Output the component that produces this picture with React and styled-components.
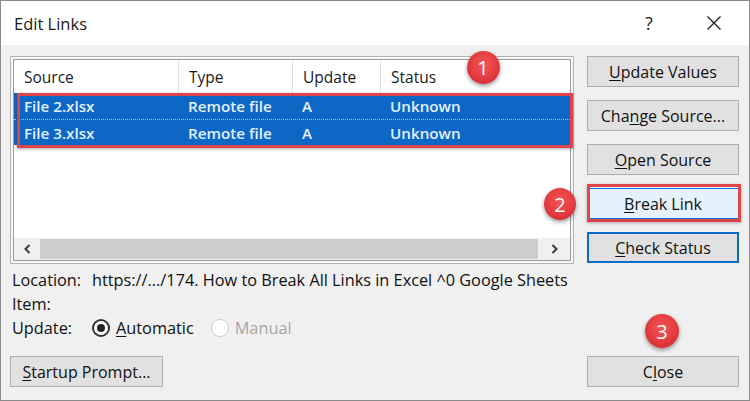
import React from "react";
import styled, { createGlobalStyle } from "styled-components";

const Global = createGlobalStyle`
  html, body { margin: 0; padding: 0; background: #fff; }
  * { box-sizing: border-box; }
  body { font-family: "Open Sans", "Noto Sans", sans-serif; }
`;

const Window = styled.div`
  position: relative;
  width: 750px;
  height: 401px;
  border: 1px solid #8a8a8a;
  display: flex;
  flex-direction: column;
  background: #f0f0f0;
  overflow: hidden;
`;

const TitleBar = styled.div`
  height: 44px;
  background: #fff;
  display: flex;
  align-items: center;
  padding-left: 13px;
  padding-right: 25px;
  flex-shrink: 0;
`;

const Title = styled.div`
  font-size: 16.5px;
  color: #1a1a1a;
  flex: 1;
`;

const TitleIcon = styled.div`
  width: 20px;
  display: flex;
  justify-content: center;
  align-items: center;
  font-size: 18px;
  color: #222;
  margin-left: ${(p) => p.$gap || 0}px;
`;

const Body = styled.div`
  flex: 1;
  display: flex;
  padding: 11px 10px 13px 9px;
`;

const LeftCol = styled.div`
  width: 564px;
  display: flex;
  flex-direction: column;
`;

const RightCol = styled.div`
  width: 152px;
  margin-left: 13px;
  display: flex;
  flex-direction: column;
  gap: 13px;
`;

const Frame = styled.div`
  height: 208px;
  border: 1px solid #b4b4b4;
  padding: 2px;
  background: #f8f8f8;
  display: flex;
`;

const ListInner = styled.div`
  flex: 1;
  border: 1px solid #9a9a9a;
  background: #fff;
  display: flex;
  flex-direction: column;
`;

const cols = "164px 114px 88px 1fr";

const HeaderRow = styled.div`
  height: 33px;
  display: grid;
  grid-template-columns: ${cols};
  font-size: 15.5px;
  color: #1a1a1a;
`;

const HeaderCell = styled.div`
  display: flex;
  align-items: center;
  padding-left: 10px;
  border-left: ${(p) => (p.$first ? "none" : "1px solid #e3e3e3")};
`;

const RowsGroup = styled.div`
  position: relative;
  &::after {
    content: "";
    position: absolute;
    top: 0;
    left: 3px;
    right: -3px;
    bottom: -3px;
    border: 3px solid #e0444b;
    box-shadow: 0 1px 3px rgba(0, 0, 0, 0.35);
    pointer-events: none;
  }
`;

const DataRow = styled.div`
  height: 26px;
  display: grid;
  grid-template-columns: ${cols};
  background: #0c67c5;
  color: #e4f1ff;
  font-size: 15.2px;
  font-weight: 600;
  border-top: ${(p) => (p.$dotted ? "1px dotted #9cc3ea" : "none")};
`;

const DataCell = styled.div`
  display: flex;
  align-items: center;
  padding-left: 10px;
`;

const Spacer = styled.div`
  flex: 1;
`;

const HScroll = styled.div`
  height: 22px;
  display: flex;
  align-items: stretch;
  background: #f0f0f0;
`;

const ScrollBtn = styled.div`
  width: ${(p) => p.$w}px;
  display: flex;
  align-items: center;
  justify-content: center;
`;

const Thumb = styled.div`
  flex: 1;
  background: #cdcdcd;
  margin: 1px 0;
`;

const InfoRows = styled.div`
  display: flex;
  flex-direction: column;
  margin-top: 4px;
  font-size: 16.3px;
  color: #111;
`;

const InfoRow = styled.div`
  height: 24px;
  display: flex;
  align-items: center;
`;

const Label = styled.div`
  width: 82px;
  padding-left: 2px;
`;

const RadioItem = styled.label`
  display: flex;
  align-items: center;
  gap: 6px;
  margin-right: 17px;
  color: ${(p) => (p.$disabled ? "#a6a6a6" : "#111")};
`;

const RadioCircle = styled.span`
  width: 18px;
  height: 18px;
  border-radius: 50%;
  border: ${(p) => (p.$disabled ? "1.5px solid #cccccc" : "2px solid #333")};
  background: #fff;
  display: flex;
  align-items: center;
  justify-content: center;
  &::after {
    content: "";
    width: 8px;
    height: 8px;
    border-radius: 50%;
    background: #222;
    display: ${(p) => (p.$checked ? "block" : "none")};
  }
`;

const Button = styled.button`
  position: relative;
  height: 31px;
  width: ${(p) => p.$w || "100%"};
  flex-shrink: 0;
  font-family: inherit;
  font-size: 16px;
  color: #111;
  background: ${(p) => (p.$hover ? "#e5f1fb" : "#e1e1e1")};
  border: ${(p) =>
    p.$default ? "2px solid #0a6cc9" : p.$hover ? "1px solid #0a78d7" : "1px solid #adadad"};
  padding: 0;
  cursor: default;
  margin-top: ${(p) => (p.$bottom ? "auto" : "0")};
  ${(p) =>
    p.$mark &&
    `&::after {
      content: "";
      position: absolute;
      top: -5px;
      bottom: -4px;
      left: -1px;
      right: -3px;
      border: 3px solid #e0444b;
      box-shadow: 0 1px 3px rgba(0,0,0,0.3);
      pointer-events: none;
    }`}
`;

const Badge = styled.div`
  position: absolute;
  left: ${(p) => p.$x - p.$d / 2}px;
  top: ${(p) => p.$y - p.$d / 2}px;
  width: ${(p) => p.$d}px;
  height: ${(p) => p.$d}px;
  border-radius: 50%;
  background: radial-gradient(circle at 50% 40%, #f35656 0%, #e33b3f 55%, #c5262b 100%);
  box-shadow: 0 2px 4px rgba(0, 0, 0, 0.4);
  color: #fff;
  font-size: 20px;
  display: flex;
  align-items: center;
  justify-content: center;
  font-family: "Open Sans", sans-serif;
`;

const U = styled.span`
  text-decoration: underline;
  text-underline-offset: 2px;
`;

const Chevron = ({ dir }) => (
  <svg width="9" height="12" viewBox="0 0 9 12">
    <path
      d={dir === "left" ? "M6.5 2 L2.5 6 L6.5 10" : "M2.5 2 L6.5 6 L2.5 10"}
      fill="none"
      stroke="#3c3c3c"
      strokeWidth="2"
    />
  </svg>
);

const rows = [
  ["File 2.xlsx", "Remote file", "A", "Unknown"],
  ["File 3.xlsx", "Remote file", "A", "Unknown"],
];

export default function App() {
  return (
    <>
      <Global />
      <Window>
        <TitleBar>
          <Title>Edit Links</Title>
          <TitleIcon>?</TitleIcon>
          <TitleIcon $gap={45}>
            <svg width="16" height="16" viewBox="0 0 16 16">
              <path d="M1.5 1.5 L14.5 14.5 M14.5 1.5 L1.5 14.5" stroke="#222" strokeWidth="1.4" />
            </svg>
          </TitleIcon>
        </TitleBar>
        <Body>
          <LeftCol>
            <Frame>
              <ListInner>
                <HeaderRow>
                  <HeaderCell $first>Source</HeaderCell>
                  <HeaderCell>Type</HeaderCell>
                  <HeaderCell>Update</HeaderCell>
                  <HeaderCell>Status</HeaderCell>
                </HeaderRow>
                <RowsGroup>
                  {rows.map((r, i) => (
                    <DataRow key={i} $dotted={i > 0}>
                      {r.map((c, j) => (
                        <DataCell key={j}>{c}</DataCell>
                      ))}
                    </DataRow>
                  ))}
                </RowsGroup>
                <Spacer />
                <HScroll>
                  <ScrollBtn $w={26}>
                    <Chevron dir="left" />
                  </ScrollBtn>
                  <Thumb />
                  <ScrollBtn $w={32}>
                    <Chevron dir="right" />
                  </ScrollBtn>
                </HScroll>
              </ListInner>
            </Frame>
            <InfoRows>
              <InfoRow>
                <Label>Location:</Label>
                <span>https://.../174. How to Break All Links in Excel ^0 Google Sheets</span>
              </InfoRow>
              <InfoRow>
                <Label>Item:</Label>
              </InfoRow>
              <InfoRow>
                <Label>Update:</Label>
                <RadioItem>
                  <RadioCircle $checked />
                  <span>
                    <U>A</U>utomatic
                  </span>
                </RadioItem>
                <RadioItem $disabled>
                  <RadioCircle $disabled />
                  <span>Manual</span>
                </RadioItem>
              </InfoRow>
            </InfoRows>
            <Button $w="153px" $bottom>
              <U>S</U>tartup Prompt...
            </Button>
          </LeftCol>
          <RightCol>
            <Button>
              <U>U</U>pdate Values
            </Button>
            <Button>
              Cha<U>n</U>ge Source...
            </Button>
            <Button>
              <U>O</U>pen Source
            </Button>
            <Button $hover $mark>
              <U>B</U>reak Link
            </Button>
            <Button $default>
              <U>C</U>heck Status
            </Button>
            <Button $bottom>
              C<U>l</U>ose
            </Button>
          </RightCol>
        </Body>
        <Badge $x={482} $y={66} $d={33}>1</Badge>
        <Badge $x={559} $y={203} $d={32}>2</Badge>
        <Badge $x={661} $y={330} $d={34}>3</Badge>
      </Window>
    </>
  );
}
